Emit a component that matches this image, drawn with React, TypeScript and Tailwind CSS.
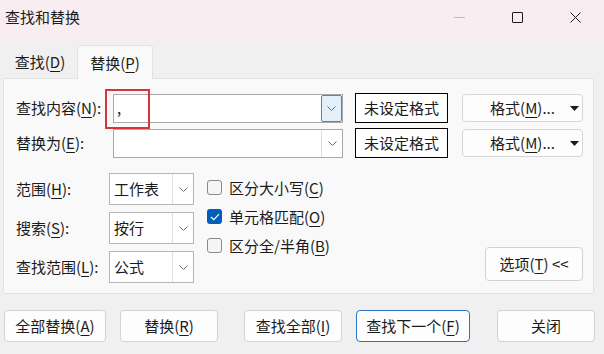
import React from "react";

const U = ({ c }: { c: string }) => (
  <span className="underline underline-offset-[3px] decoration-1">{c}</span>
);

function Chevron() {
  return (
    <svg width="9" height="5" viewBox="0 0 9 5">
      <path d="M0.5 0.5 L4.5 4.5 L8.5 0.5" fill="none" stroke="#6b6b6b" strokeWidth="1" />
    </svg>
  );
}

function Tri() {
  return (
    <svg width="9" height="5" viewBox="0 0 9 5">
      <path d="M0 0 L9 0 L4.5 5 Z" fill="#1b1b1b" />
    </svg>
  );
}

function Combo({ text, active }: { text?: string; active?: boolean }) {
  return (
    <div className="w-[230px] h-[29px] border border-[#a9a9a9] bg-white flex">
      <div className="flex-1 pl-[3px] flex items-center leading-[20px]">{text}</div>
      {active ? (
        <div className="w-[21px] h-full bg-[#e3eff9] border border-[#3f8ad2] rounded-[2px] flex items-center justify-center">
          <Chevron />
        </div>
      ) : (
        <div className="w-[21px] h-full border-l border-[#dcdcdc] flex items-center justify-center">
          <Chevron />
        </div>
      )}
    </div>
  );
}

function NoFmt() {
  return (
    <div className="ml-[12px] w-[93px] h-[30px] border border-black bg-white flex items-center justify-center leading-[20px]">
      未设定格式
    </div>
  );
}

function FmtBtn() {
  return (
    <div className="ml-[14px] w-[121px] h-[28px] rounded-[4px] border border-[#d6d6d6] bg-[#fdfdfd] relative flex items-center justify-center leading-[20px]">
      <span>
        格式(<U c="M" />)...
      </span>
      <span className="absolute right-[3px] top-[11px] flex">
        <Tri />
      </span>
    </div>
  );
}

function Select({ text }: { text: string }) {
  return (
    <div className="w-[85px] h-[32px] border border-[#b5b5b5] bg-white flex">
      <div className="flex-1 pl-[4px] flex items-center leading-[20px]">{text}</div>
      <div className="w-[21px] h-full border-l border-[#dedede] flex items-center justify-center">
        <Chevron />
      </div>
    </div>
  );
}

function Check({ checked, children }: { checked?: boolean; children: React.ReactNode }) {
  return (
    <div className="h-[29px] flex items-center">
      {checked ? (
        <div className="w-[15px] h-[15px] rounded-[3px] bg-[#005fb8] flex items-center justify-center">
          <svg width="10" height="8" viewBox="0 0 10 8">
            <path d="M1 4 L3.8 6.6 L9 1.2" fill="none" stroke="#ffffff" strokeWidth="1.2" />
          </svg>
        </div>
      ) : (
        <div className="w-[15px] h-[15px] rounded-[3px] border border-[#8a8a8a] bg-[#f5f5f5]" />
      )}
      <span className="ml-[7px] leading-[20px]">{children}</span>
    </div>
  );
}

function Btn({ children, w, ml, primary }: { children: React.ReactNode; w: string; ml: string; primary?: boolean }) {
  return (
    <div
      className={`${w} ${ml} h-[32px] rounded-[4px] border ${
        primary ? "border-[#2a76c6]" : "border-[#d3d3d3]"
      } bg-[#fdfdfd] flex items-center justify-center leading-[20px]`}
    >
      {children}
    </div>
  );
}

export default function App() {
  return (
    <div className="w-[604px] h-[354px] bg-[#f0f0f0] flex flex-col text-[15px] text-[#1b1b1b] [font-family:'Noto_Sans_CJK_SC',sans-serif] overflow-hidden">
      {/* title bar */}
      <div className="h-[40px] bg-[#f8eef1] flex items-start shrink-0">
        <div className="pl-[5px] pt-[6px] leading-[22px]">查找和替换</div>
        <div className="ml-auto flex">
          <div className="w-[58px] h-[34px] flex items-center justify-center">
            <div className="w-[11px] h-px bg-[#bdbdbd]" />
          </div>
          <div className="w-[58px] h-[34px] flex items-center justify-center">
            <div className="w-[11px] h-[11px] border border-[#1b1b1b] rounded-[1px]" />
          </div>
          <div className="w-[58px] h-[34px] flex items-center justify-center">
            <svg width="11" height="11" viewBox="0 0 11 11">
              <path d="M0.5 0.5 L10.5 10.5 M10.5 0.5 L0.5 10.5" stroke="#1b1b1b" strokeWidth="1" />
            </svg>
          </div>
        </div>
      </div>

      {/* tabs */}
      <div className="h-[38px] flex items-end pl-[3px] shrink-0">
        <div className="w-[74px] h-[32px] flex items-center justify-center leading-[20px]">
          <span>
            查找(<U c="D" />)
          </span>
        </div>
        <div className="w-[76px] h-[34px] bg-[#f9f9f9] border border-b-0 border-[#e3e3e3] rounded-t-[3px] -mb-px relative z-10 flex items-center justify-center leading-[20px]">
          <span>
            替换(<U c="P" />)
          </span>
        </div>
      </div>

      {/* panel */}
      <div className="ml-[3px] w-[591px] h-[216px] shrink-0 bg-[#f9f9f9] border border-[#e3e3e3] rounded-[2px] relative pt-[14px] pl-[12px] pr-[10px]">
        <div className="flex items-center h-[30px]">
          <div className="w-[97px] leading-[20px]">
            查找内容(<U c="N" />):
          </div>
          <Combo text="," active />
          <NoFmt />
          <FmtBtn />
        </div>
        <div className="flex items-center h-[30px] mt-[5px]">
          <div className="w-[97px] leading-[20px]">
            替换为(<U c="E" />):
          </div>
          <Combo />
          <NoFmt />
          <FmtBtn />
        </div>

        <div className="flex mt-[15px]">
          <div className="flex flex-col gap-[7px]">
            <div className="flex items-center">
              <div className="w-[93px] leading-[20px]">
                范围(<U c="H" />):
              </div>
              <Select text="工作表" />
            </div>
            <div className="flex items-center">
              <div className="w-[93px] leading-[20px]">
                搜索(<U c="S" />):
              </div>
              <Select text="按行" />
            </div>
            <div className="flex items-center">
              <div className="w-[93px] leading-[20px]">
                查找范围(<U c="L" />):
              </div>
              <Select text="公式" />
            </div>
          </div>
          <div className="ml-[13px] flex flex-col">
            <Check>
              区分大小写(<U c="C" />)
            </Check>
            <Check checked>
              单元格匹配(<U c="O" />)
            </Check>
            <Check>
              区分全/半角(<U c="B" />)
            </Check>
          </div>
          <div className="flex-1" />
          <div className="self-end mb-[2px] w-[98px] h-[34px] rounded-[4px] border border-[#d3d3d3] bg-[#fdfdfd] flex items-center justify-center leading-[20px]">
            <span>
              选项(<U c="T" />) &lt;&lt;
            </span>
          </div>
        </div>

        {/* red annotation box */}
        <div className="absolute left-[101px] top-[10px] w-[45px] h-[40px] border-2 border-[#d7333e]" />
      </div>

      {/* bottom buttons */}
      <div className="flex pl-[4px] mt-[16px]">
        <Btn w="w-[102px]" ml="ml-0">
          <span>
            全部替换(<U c="A" />)
          </span>
        </Btn>
        <Btn w="w-[98px]" ml="ml-[14px]">
          <span>
            替换(<U c="R" />)
          </span>
        </Btn>
        <Btn w="w-[98px]" ml="ml-[26px]">
          <span>
            查找全部(<U c="I" />)
          </span>
        </Btn>
        <Btn w="w-[114px]" ml="ml-[14px]" primary>
          <span>
            查找下一个(<U c="F" />)
          </span>
        </Btn>
        <Btn w="w-[98px]" ml="ml-[27px]">
          <span>关闭</span>
        </Btn>
      </div>
    </div>
  );
}
